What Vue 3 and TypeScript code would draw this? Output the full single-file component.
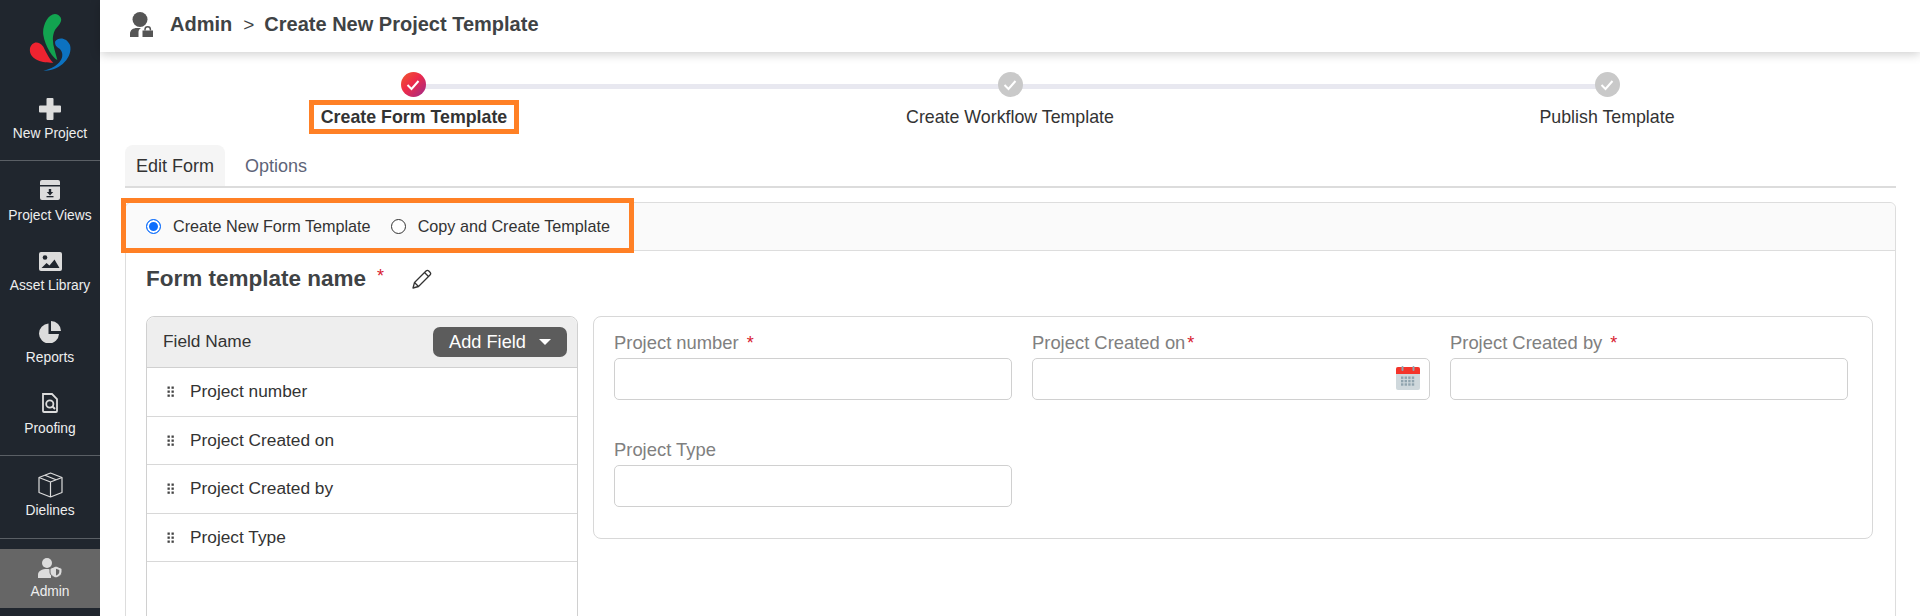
<script setup lang="ts">
const fields: string[] = ['Project number', 'Project Created on', 'Project Created by', 'Project Type']
const steps = [
  { label: 'Create Form Template', done: true },
  { label: 'Create Workflow Template', done: false },
  { label: 'Publish Template', done: false },
]
const grip: number[][] = [[0,0],[4,0],[0,4],[4,4],[0,8],[4,8]]
const calDots: number[][] = []
for (let r = 0; r < 3; r++) for (let c = 0; c < 4; c++) calDots.push([5 + c * 3.6, 10.5 + r * 3.4])
</script>

<template>
  <div class="shell">
    <aside class="side">
      <div class="logo">
        <svg width="60" height="62" viewBox="0 0 60 62">
          <g transform="translate(-20,-12) scale(.3333)">
            <path fill="#12a450" d="M175 45C150 30 125 75 130 105C135 140 160 175 172 180C165 150 150 120 165 90C175 75 195 60 175 45Z"/>
            <path fill="#ee2330" d="M90 145C95 125 115 120 130 140C140 160 150 180 160 188C130 190 85 180 90 145Z"/>
            <path fill="#0c72c0" d="M165 125C175 110 200 112 210 135C220 170 180 215 130 212C165 205 195 180 185 155C180 140 165 145 165 125Z"/>
          </g>
        </svg>
      </div>
      <div class="sec first">
        <div class="item">
          <span class="ico"><svg width="22" height="22" viewBox="0 0 22 22"><path fill="#dcdcdc" d="M8.5 0h5a1 1 0 0 1 1 1v6.500h6.500a1 1 0 0 1 1 1v5a1 1 0 0 1-1 1h-6.500V21a1 1 0 0 1-1 1h-5a1 1 0 0 1-1-1v-6.500H1a1 1 0 0 1-1-1v-5a1 1 0 0 1 1-1h6.500V1a1 1 0 0 1 1-1z"/></svg></span>
          <span class="lbl">New Project</span>
        </div>
      </div>
      <div class="sec">
        <div class="item">
          <span class="ico"><svg width="22" height="20" viewBox="0 0 22 20"><path fill="#dcdcdc" d="M3 0h16a2 2 0 0 1 2 2v3H1V2a2 2 0 0 1 2-2z"/><path fill="#dcdcdc" d="M1 6.500h20V18a2 2 0 0 1-2 2H3a2 2 0 0 1-2-2z"/><path fill="#20262e" d="M9.800 9h2.400v3h2l-3.200 3.500L7.800 12h2z"/><rect x="7.500" y="16" width="7" height="1.300" fill="#20262e"/></svg></span>
          <span class="lbl">Project Views</span>
        </div>
        <div class="item">
          <span class="ico"><svg width="23" height="19" viewBox="0 0 23 19"><rect width="23" height="19" rx="2" fill="#dcdcdc"/><circle cx="6" cy="5.500" r="2.300" fill="#20262e"/><path fill="#20262e" d="M2.500 16l5-5 3 2.500 5-6 5 8.500z"/></svg></span>
          <span class="lbl tight">Asset Library</span>
        </div>
        <div class="item">
          <span class="ico"><svg width="22" height="22" viewBox="0 0 22 22"><path fill="#dcdcdc" d="M9.500 2.500v10.500H20A10 10 0 1 1 9.500 2.500z"/><path fill="#dcdcdc" d="M12 0a10 10 0 0 1 10 10H12z"/></svg></span>
          <span class="lbl">Reports</span>
        </div>
        <div class="item">
          <span class="ico"><svg width="18" height="20" viewBox="0 0 18 20"><path fill="none" stroke="#dcdcdc" stroke-width="1.800" d="M2 1h9l5 5v12a1 1 0 0 1-1 1H3a1 1 0 0 1-1-1z"/><circle cx="8.800" cy="11" r="3.600" fill="none" stroke="#dcdcdc" stroke-width="1.800"/><path stroke="#dcdcdc" stroke-width="2" d="M11.500 13.500l2.500 2.500"/></svg></span>
          <span class="lbl">Proofing</span>
        </div>
      </div>
      <div class="sec last">
        <div class="item">
          <span class="ico"><svg width="25" height="26" viewBox="0 0 25 26"><g fill="none" stroke="#dcdcdc" stroke-width="1.200" stroke-linejoin="round"><path d="M12.500 1L24 5.500v15L12.500 25 1 20.500v-15z"/><path d="M1 5.500L12.500 10 24 5.500M12.500 10v15M7 3.200l11 4.600"/></g></svg></span>
          <span class="lbl">Dielines</span>
        </div>
      </div>
      <div class="item active">
        <span class="ico"><svg width="24" height="20" viewBox="0 0 24 20"><circle cx="9" cy="5" r="5" fill="#dcdcdc"/><path fill="#dcdcdc" d="M0 20v-3.500C0 13 4 11 9 11c2 0 3 .3 4 .7V20z"/><path fill="#dcdcdc" stroke="#666" stroke-width="1" d="M18 8l6 2.500v3.500c0 3-3 5-6 6-3-1-6-3-6-6v-3.500z"/><path fill="#666" d="M18 10.800l3.300 1.300V14c0 1.700-1.800 3-3.300 3.600z"/></svg></span>
        <span class="lbl">Admin</span>
      </div>
    </aside>

    <div class="main">
      <header class="top">
        <svg width="23" height="25" viewBox="0 0 23 25"><circle cx="10" cy="7.500" r="7.500" fill="#555"/><path fill="#555" d="M0 25v-3c0-4 3-6 7-6h4c-1.500 1-2.500 2-2.500 4v5z"/><rect x="12.500" y="18.500" width="10.500" height="6.500" fill="#555"/><path fill="none" stroke="#555" stroke-width="1.500" d="M15 18.500v-1a2.700 2.700 0 0 1 5.400 0v1"/></svg>
        <span class="crumb">Admin</span>
        <span class="sep">&gt;</span>
        <span class="crumb">Create New Project Template</span>
      </header>

      <div class="content">
        <div class="stepper">
          <div v-for="s in steps" :key="s.label" class="step">
            <span class="dot" :class="{ on: s.done }">
              <svg width="14" height="12" viewBox="0 0 14 12"><path fill="none" stroke="#fff" stroke-width="2" d="M1.500 6l4 4 7-8"/></svg>
            </span>
            <span class="step-lbl" :class="{ hl: s.done }">{{ s.label }}</span>
          </div>
        </div>

        <div class="tabs">
          <span class="tab sel">Edit Form</span>
          <span class="tab">Options</span>
        </div>

        <section class="card">
          <div class="card-head">
            <div class="hlbox"></div>
            <label class="radio"><span class="rd checked"></span>Create New Form Template</label>
            <label class="radio"><span class="rd"></span>Copy and Create Template</label>
          </div>
          <div class="card-body">
            <div class="title-row">
              <span class="title">Form template name</span>
              <span class="star big">*</span>
              <svg class="pen" width="20" height="20" viewBox="0 0 20 20"><g fill="none" stroke="#333" stroke-width="1.300" stroke-linejoin="round"><path d="M1 19l1.500-5.500L14 2a2 2 0 0 1 2.800 0l1.200 1.200a2 2 0 0 1 0 2.800L6.500 17.500z"/><path d="M12.500 3.500l4 4M2.500 13.500l4 4"/></g></svg>
            </div>
            <div class="cols">
              <div class="list">
                <div class="list-head">
                  <span class="lh-text">Field Name</span>
                  <button class="add" type="button">Add Field<i class="caret"></i></button>
                </div>
                <div v-for="f in fields" :key="f" class="row">
                  <svg width="8" height="11" viewBox="0 0 8 11"><rect v-for="(g, i) in grip" :key="i" :x="g[0] + .5" :y="g[1] + .5" width="2.300" height="2.300" fill="#444"/></svg>
                  <span>{{ f }}</span>
                </div>
              </div>
              <div class="form">
                <div class="fld"><div class="flbl">Project number<span class="star sp">*</span></div><div class="inp"></div></div>
                <div class="fld"><div class="flbl">Project Created on<span class="star tight">*</span></div>
                  <div class="inp">
                    <svg class="cal" width="24" height="24" viewBox="0 0 24 24">
                      <rect y="1" width="24" height="23" rx="2" fill="#cfd8dc"/>
                      <path fill="#f4342a" d="M2 1h20a2 2 0 0 1 2 2v5H0V3a2 2 0 0 1 2-2z"/>
                      <rect x="5.500" width="2" height="5" rx="1" fill="#90a4ae"/><rect x="16.500" width="2" height="5" rx="1" fill="#90a4ae"/>
                      <rect v-for="(d, i) in calDots" :key="i" :x="d[0]" :y="d[1]" width="2.400" height="2.400" fill="#90a4ae"/>
                    </svg>
                  </div>
                </div>
                <div class="fld"><div class="flbl">Project Created by<span class="star sp">*</span></div><div class="inp"></div></div>
                <div class="fld"><div class="flbl">Project Type</div><div class="inp"></div></div>
              </div>
            </div>
          </div>
        </section>
      </div>
    </div>
  </div>
</template>

<style>
html, body { margin: 0; background: #fff; }
</style>

<style scoped>
.shell { display: flex; height: 616px; overflow: hidden; font-family: "Liberation Sans", Arial, sans-serif; color: #333; }
.side { width: 100px; flex: none; background: #20262e; display: flex; flex-direction: column; }
.logo { height: 85px; display: flex; justify-content: center; padding-top: 12px; box-sizing: border-box; }
.sec { border-bottom: 1px solid #5a5f65; padding-bottom: 10px; }
.sec.first { height: 75px; padding-bottom: 0; box-sizing: content-box; }
.sec.first .item { padding-top: 12px; }
.sec.first .lbl { margin-top: 5px; }
.sec.last { margin-bottom: 10px; padding-bottom: 11px; }
.item { height: 71px; box-sizing: border-box; padding-top: 17px; display: flex; flex-direction: column; align-items: center; }
.item.active { height: 59px; padding-top: 7px; background: #666; }
.ico { height: 24px; display: flex; align-items: center; justify-content: center; }
.lbl { margin-top: 6px; font-size: 13.8px; line-height: 16px; color: #eee; white-space: nowrap; }
.lbl.tight { margin-top: 5px; }
.item.active .lbl { margin-top: 4px; }
.main { flex: 1; min-width: 0; display: flex; flex-direction: column; }
.top { height: 52px; flex: none; display: flex; align-items: center; padding-left: 30px; padding-bottom: 3px; box-sizing: border-box; background: #fff; box-shadow: 0 2px 10px rgba(0,0,0,.2); position: relative; }
.crumb { font-weight: 700; font-size: 20px; color: #3f4345; white-space: nowrap; }
.top svg { margin-right: 17px; }
.sep { margin: 0 10px 0 11px; font-size: 19px; font-weight: 400; color: #3f4345; }
.content { padding: 20px 24px 0 25px; flex: 1; }
.stepper { display: flex; justify-content: space-between; margin: 0 89px 0 88px; position: relative; }
.stepper::before { content: ""; position: absolute; left: 200px; right: 200px; top: 12px; height: 5px; background: #e8e8f0; }
.step { width: 400px; display: flex; flex-direction: column; align-items: center; position: relative; }
.dot { width: 25px; height: 25px; border-radius: 50%; background: #c9c9c9; display: flex; align-items: center; justify-content: center; }
.dot.on { background: linear-gradient(135deg, #f0592a, #ee2a4a 45%, #9c2a8c); }
.step-lbl { margin-top: 3px; height: 34px; line-height: 34px; font-size: 17.8px; color: #333; white-space: nowrap; }
.step-lbl.hl { border: 5px solid #ff8025; line-height: 24px; box-sizing: border-box; width: 210px; margin-left: 2px; text-align: center; font-weight: 700; }
.tabs { display: flex; margin-top: 11px; border-bottom: 2px solid #dcdcdc; height: 41px; }
.tab { padding: 0 20px; line-height: 43px; font-size: 18px; color: #5e6478; }
.tab.sel { width: 100px; box-sizing: border-box; padding: 0; text-align: center; background: #f5f5f5; color: #333; border-radius: 8px 8px 0 0; }
.card { margin-top: 14px; border: 1px solid #ddd; border-radius: 6px; height: 500px; }
.card-head { height: 47px; background: #fafafa; border-bottom: 1px solid #ddd; border-radius: 6px 6px 0 0; display: flex; align-items: center; padding-left: 20px; gap: 20px; position: relative; }
.hlbox { position: absolute; left: -5px; top: -5px; width: 513px; height: 55px; border: 5px solid #ff8025; box-sizing: border-box; pointer-events: none; }
.radio { display: flex; align-items: center; font-size: 16.2px; color: #333; gap: 12px; white-space: nowrap; }
.rd { width: 15px; height: 15px; box-sizing: border-box; border-radius: 50%; border: 1.500px solid #333; background: #fff; }
.rd.checked { border: 1.500px solid #0d6efd; box-shadow: inset 0 0 0 2px #fff; background: #0d6efd; }
.card-body { padding: 0 22px 0 20px; }
.title-row { height: 65px; padding-bottom: 10px; box-sizing: border-box; display: flex; align-items: center; }
.title { font-size: 22.5px; font-weight: 700; color: #3f4345; white-space: nowrap; }
.star { color: #d8202f; font-size: 18px; }
.star.big { margin: -4px 0 0 11px; }
.star.sp { margin-left: 8px; }
.star.tight { margin-left: 2px; }
.pen { margin-left: 28px; }
.cols { display: flex; gap: 15px; align-items: flex-start; }
.list { width: 432px; flex: none; height: 400px; box-sizing: border-box; border: 1px solid #d0d0d0; border-radius: 8px 8px 0 0; }
.list-head { height: 50px; background: #eee; border-bottom: 1px solid #d0d0d0; border-radius: 8px 8px 0 0; display: flex; align-items: center; justify-content: space-between; padding: 0 10px 0 16px; font-size: 17.3px; }
.lh-text { margin-bottom: 2px; }
.add { width: 134px; height: 30px; border: 0; background: #5c5c5c; border-radius: 7px; color: #fff; font: 18.2px "Liberation Sans", Arial, sans-serif; display: flex; align-items: center; justify-content: center; gap: 13px; padding: 0; }
.caret { width: 0; height: 0; border: 6px solid transparent; border-top: 6px solid #fff; border-bottom: 0; }
.row { height: 48.5px; box-sizing: border-box; border-bottom: 1px solid #d8d8d8; display: flex; align-items: center; padding-left: 20px; gap: 15px; font-size: 17.3px; color: #333; }
.form { flex: 1; border: 1px solid #d8d8d8; border-radius: 8px; box-sizing: border-box; height: 223px; padding: 16px 24px 0 20px; display: grid; grid-template-columns: repeat(3, 398px); column-gap: 20px; row-gap: 40px; align-content: start; }
.flbl { height: 20px; line-height: 20px; font-size: 18.4px; color: #808080; margin-bottom: 5px; white-space: nowrap; }
.inp { height: 42px; box-sizing: border-box; border: 1px solid #d0d0d0; border-radius: 5px; position: relative; }
.cal { position: absolute; right: 9px; top: 7px; }
</style>
